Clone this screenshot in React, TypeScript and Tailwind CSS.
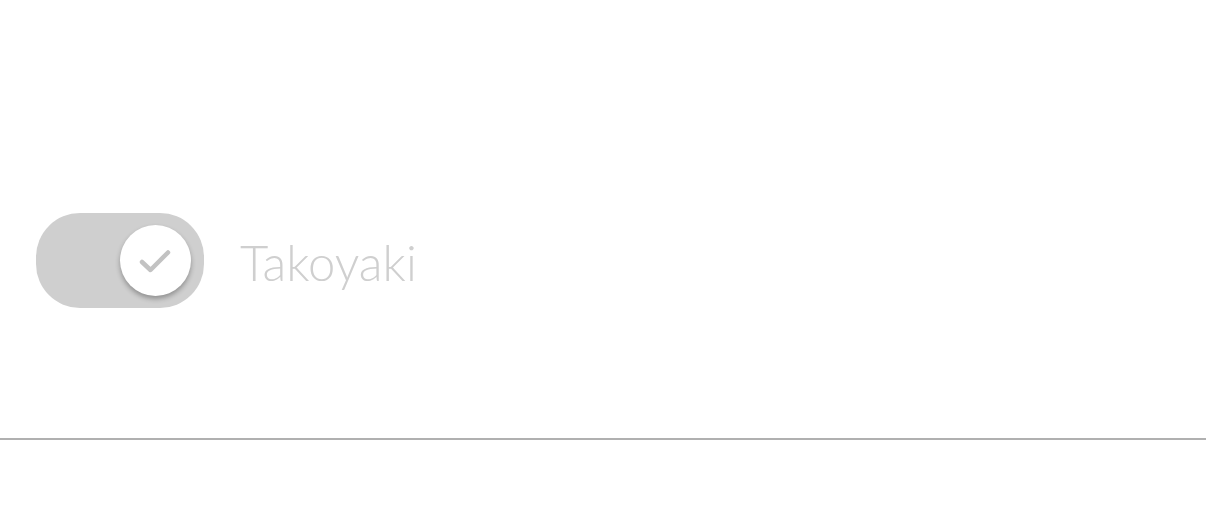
import React from "react";

export default function App() {
  return (
    <div className="w-[1206px] h-[522px] bg-white flex flex-col">
      <div className="pt-[213px] pl-[36px] flex items-center gap-[36px]">
        <div className="relative w-[168px] h-[95px] rounded-[44px] bg-[#cfcfcf] flex items-center">
          <div className="ml-[84px] w-[71px] h-[71px] rounded-full bg-white shadow-[0_3px_5px_rgba(0,0,0,0.3)] flex items-center justify-center">
            <svg width="40" height="40" viewBox="0 0 40 40" fill="none">
              <path d="M6 21 L14.5 29 L32 11.5" stroke="#c2c2c2" strokeWidth="4.5" strokeLinecap="round" strokeLinejoin="round" />
            </svg>
          </div>
        </div>
        <span className="text-[49px] leading-none font-light text-[#cfcfcf] mt-[3px]" style={{ fontFamily: "Lato, 'Noto Sans', sans-serif" }}>
          Takoyaki
        </span>
      </div>
      <div className="mt-[130px] h-[2px] w-full bg-[#b0b0b0]" />
    </div>
  );
}
